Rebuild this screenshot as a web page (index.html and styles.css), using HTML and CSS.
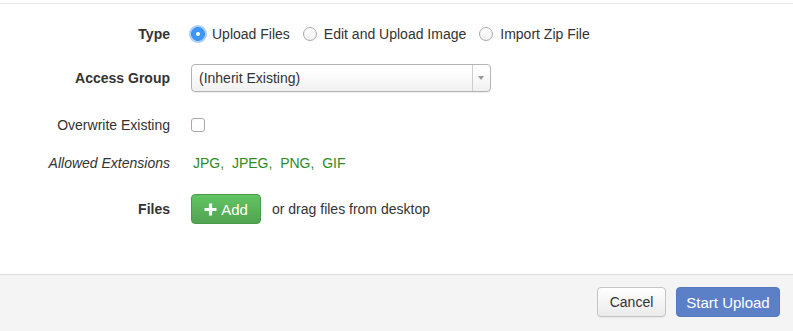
FILE: index.html
```html
<!DOCTYPE html>
<html lang="en">
<head>
    <meta charset="UTF-8">
    <title>Upload Files</title>
    <link rel="stylesheet" href="styles.css">
</head>
<body>

    <div class="modal">
        <div class="modal-top"></div>

        <div class="modal-body">

            <!-- Type -->
            <div class="form-row row-type">
                <label class="form-label">Type</label>
                <div class="form-control radios">
                    <span class="radio checked"></span><span class="radio-text">Upload Files</span>
                    <span class="radio"></span><span class="radio-text">Edit and Upload Image</span>
                    <span class="radio"></span><span class="radio-text">Import Zip File</span>
                </div>
            </div>

            <!-- Access group -->
            <div class="form-row row-group">
                <label class="form-label">Access Group</label>
                <div class="form-control">
                    <div class="select">
                        <span class="select-value">(Inherit Existing)</span>
                        <span class="select-arrow"></span>
                    </div>
                </div>
            </div>

            <div class="form-row row-overwrite">
                <label class="form-label normal">Overwrite Existing</label>
                <div class="form-control">
                    <span class="checkbox"></span>
                </div>
            </div>

            <div class="form-row row-ext">
                <label class="form-label italic">Allowed Extensions</label>
                <div class="form-control extensions">
                    JPG,&nbsp; JPEG,&nbsp; PNG,&nbsp; GIF
                </div>
            </div>

            <div class="form-row row-files">
                <label class="form-label">Files</label>
                <div class="form-control">
                    <button class="btn btn-add">
                        <svg class="plus" width="13" height="13" viewBox="0 0 13 13">
                            <path d="M6.5 0.5v12M0.5 6.5h12" stroke="#fff" stroke-width="3.2" fill="none"/>
                        </svg>Add
                    </button>
                    <span class="drag-hint">or drag files from desktop</span>
                </div>
            </div>

        </div>

        <div class="modal-footer">
            <button class="btn btn-cancel">Cancel</button>
            <button class="btn btn-primary">Start Upload</button>
        </div>
    </div>

</body>
</html>
```

FILE: styles.css
```css
body {
    margin: 0;
    padding: 0;
    font-family: "Liberation Sans", Arial, sans-serif;
    font-size: 14px;
    color: #333;
    background-color: #fff;
}

*,
*::before,
*::after {
    box-sizing: border-box;
}

.modal-top {
    height: 4px;
    border-bottom: 1px solid #e8e8e8;
}

.modal-body {
    padding: 15px 0 50px 0;
    height: 270px;
}

.form-row {
    display: flex;
    align-items: center;
    height: 30px;
}

.row-type { margin-bottom: 14px; }
.row-group { margin-bottom: 17px; }
.row-overwrite { margin-bottom: 8px; }
.row-ext { margin-bottom: 16px; }

.form-label {
    width: 170px;
    text-align: right;
    font-weight: bold;
    margin-right: 21px;
}

.form-label.normal {
    font-weight: normal;
}

.form-label.italic {
    font-weight: normal;
    font-style: italic;
}

.form-control {
    display: flex;
    align-items: center;
}

/* Radios */
.radio {
    width: 14px;
    height: 14px;
    border-radius: 50%;
    border: 1px solid #a9a9a9;
    background: linear-gradient(#fff, #f1f1f1);
    margin-right: 7px;
    position: relative;
}

.radio.checked {
    border-color: #3a8ef0;
    background: #3d95f7;
    box-shadow: 0 0 0 2px rgba(100, 165, 250, 0.55);
}

.radio.checked::after {
    content: "";
    position: absolute;
    width: 4px;
    height: 4px;
    border-radius: 50%;
    background: #fff;
    top: 4px;
    left: 4px;
}

.radio-text {
    margin-right: 13px;
}

/* Select */
.select {
    width: 300px;
    height: 28px;
    border: 1px solid #b4b4b4;
    border-radius: 4px;
    background: linear-gradient(#fff 20%, #f0f0f0);
    display: flex;
    align-items: center;
    box-shadow: 0 1px 1px rgba(0, 0, 0, 0.08);
}

.select-value {
    flex: 1;
    padding-left: 7px;
}

.select-arrow {
    width: 18px;
    height: 100%;
    border-left: 1px solid #ccc;
    position: relative;
}

.select-arrow::after {
    content: "";
    position: absolute;
    left: 5px;
    top: 11px;
    border-left: 3px solid transparent;
    border-right: 3px solid transparent;
    border-top: 4px solid #999;
}

.checkbox {
    width: 14px;
    height: 14px;
    border: 1px solid #a9a9a9;
    border-radius: 3px;
    background: #fff;
}

.extensions {
    color: #2f8a23;
    padding-left: 2px;
}

/* Buttons */
.btn {
    font-family: "Liberation Sans", Arial, sans-serif;
    font-size: 14px;
    height: 30px;
    border-radius: 4px;
    cursor: pointer;
    padding: 0;
    white-space: nowrap;
}

.btn-add {
    width: 70px;
    background: linear-gradient(#62c462, #51a351);
    border: 1px solid #4a9a4a;
    color: #fff;
    font-size: 15px;
    display: flex;
    align-items: center;
    justify-content: center;
}

.plus {
    margin-right: 4px;
}

.drag-hint {
    margin-left: 11px;
}

.modal-footer {
    border-top: 1px solid #dcdcdc;
    background-color: #f4f4f4;
    height: 57px;
    display: flex;
    justify-content: flex-end;
    align-items: center;
    gap: 10px;
    padding: 0 13px 2px 0;
}

.btn-cancel {
    width: 69px;
    background: linear-gradient(#fff, #ebebeb);
    border: 1px solid #c5c5c5;
    color: #333;
    box-shadow: 0 1px 1px rgba(0, 0, 0, 0.06);
}

.btn-primary {
    width: 104px;
    background-color: #5b80c7;
    border: 1px solid #5479c2;
    color: #fff;
    font-size: 15px;
}
```
